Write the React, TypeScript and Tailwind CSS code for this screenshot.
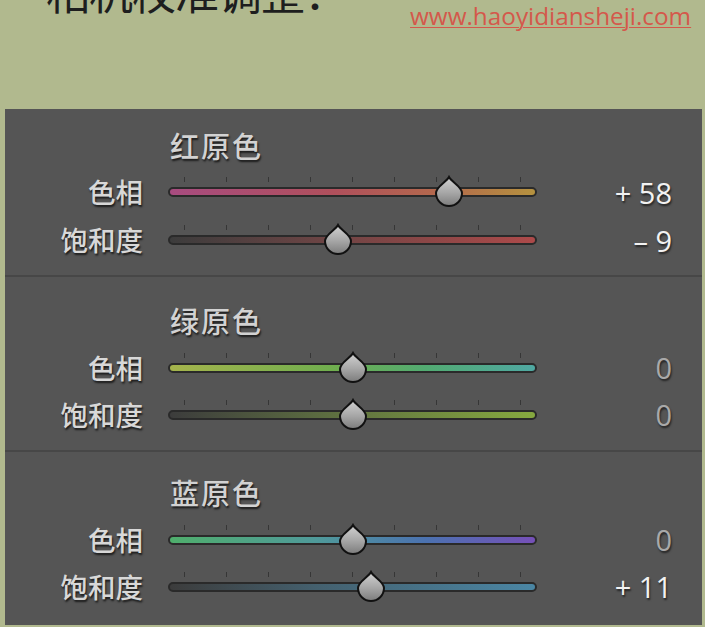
import React from 'react';

type Row = { label: string; value: number; track: string };
type Section = { title: string; box: string; rowsTop: string; rowH: string; rows: Row[] };

const sections: Section[] = [
  {
    title: '红原色',
    box: 'h-[166px] pt-[16px]',
    rowsTop: 'mt-[3px]',
    rowH: 'h-[48px]',
    rows: [
      { label: '色相', value: 58, track: 'bg-[linear-gradient(90deg,#a84c80,#b0505c_45%,#b46a4c_75%,#b5923f)]' },
      { label: '饱和度', value: -9, track: 'bg-[linear-gradient(90deg,#3c3c3c,#6a4444_40%,#ad4a4a)]' },
    ],
  },
  {
    title: '绿原色',
    box: 'h-[175px] pt-[23px] border-t-2 border-[#474747]',
    rowsTop: 'mt-[4px]',
    rowH: 'h-[47px]',
    rows: [
      { label: '色相', value: 0, track: 'bg-[linear-gradient(90deg,#a5b44c,#6fae4e_45%,#52ab72_70%,#4fa8a2)]' },
      { label: '饱和度', value: 0, track: 'bg-[linear-gradient(90deg,#3c3c3c,#5a6a40_40%,#86a93f)]' },
    ],
  },
  {
    title: '蓝原色',
    box: 'h-[175px] pt-[20px] border-t-2 border-[#474747]',
    rowsTop: 'mt-[4px]',
    rowH: 'h-[47px]',
    rows: [
      { label: '色相', value: 0, track: 'bg-[linear-gradient(90deg,#4fae6c,#4f9a9a_40%,#4b72b0_70%,#7650b8)]' },
      { label: '饱和度', value: 11, track: 'bg-[linear-gradient(90deg,#3c3c3c,#44606e_40%,#4a86a4)]' },
    ],
  },
];

const ticks = [0, 1, 2, 3, 4, 5, 6, 7, 8];

function Thumb({ value }: { value: number }) {
  const x = 184.5 + (value / 100) * 166;
  return (
    <svg
      className="absolute top-[-12px]"
      style={{ left: x - 15 }}
      width="30"
      height="33"
      viewBox="0 0 30 33"
    >
      <defs>
        <linearGradient id={`tg${value}`} x1="0" y1="0" x2="0" y2="1">
          <stop offset="0" stopColor="#d2d2d2" />
          <stop offset="0.55" stopColor="#a6a6a6" />
          <stop offset="1" stopColor="#7c7c7c" />
        </linearGradient>
      </defs>
      <path
        d="M15 2 C17.5 7 28 11.5 28 18 A13 13 0 0 1 2 18 C2 11.5 12.5 7 15 2 Z"
        fill={`url(#tg${value})`}
        stroke="#111"
        strokeWidth="2"
      />
    </svg>
  );
}

function Slider({ row, h }: { row: Row; h: string }) {
  const shown = row.value === 0 ? '0' : row.value > 0 ? `+ ${row.value}` : `– ${-row.value}`;
  return (
    <div className={`flex items-center ${h}`}>
      <div className="w-[138px] text-right text-[27.5px] leading-none font-medium text-[#d8d8d8] [text-shadow:1px_2px_2px_rgba(0,0,0,0.7)]">
        {row.label}
      </div>
      <div className="relative ml-[25px] w-[369px] h-[10px]">
        {ticks.map((t) => (
          <span
            key={t}
            className="absolute top-[-10px] w-px h-[5px] bg-[#363636]"
            style={{ left: 16 + t * 42 }}
          />
        ))}
        <div className={`h-full rounded-full border-2 border-[#2a2a2a] ${row.track}`} />
        <Thumb value={row.value} />
      </div>
      <div
        className={`w-[135px] text-right text-[29px] leading-none font-['Open_Sans',sans-serif] [text-shadow:1px_2px_2px_rgba(0,0,0,0.6)] ${
          row.value === 0 ? 'text-[#a9a9a9]' : 'text-[#f2f2f2]'
        }`}
      >
        {shown}
      </div>
    </div>
  );
}

export default function App() {
  return (
    <div className="w-[705px] h-[627px] overflow-hidden bg-[#b1b98e] font-['Noto_Sans_CJK_SC',sans-serif]">
      <div className="relative flow-root h-[109px]">
        <div className="pl-[46px] -mt-[31px] text-[44px] leading-none text-[#1e1e1e] tracking-[-1px]">
          相机校准调整：
        </div>
        <div className="absolute left-[410px] top-0 text-[24.3px] leading-[32px] text-[#d4584b] underline underline-offset-2 decoration-1 font-['Open_Sans',sans-serif]">
          www.haoyidiansheji.com
        </div>
      </div>
      <div className="ml-[5px] mr-[3px] h-[516px] bg-[#555555]">
        {sections.map((s) => (
          <div key={s.title} className={`box-border ${s.box}`}>
            <div className="pl-[165px] h-[40px] flex items-center text-[29px] leading-none font-medium tracking-[2px] text-[#d2d2d2] [text-shadow:1px_2px_2px_rgba(0,0,0,0.7)]">
              {s.title}
            </div>
            <div className={s.rowsTop}>
              {s.rows.map((r) => (
                <Slider key={r.label} row={r} h={s.rowH} />
              ))}
            </div>
          </div>
        ))}
      </div>
    </div>
  );
}
